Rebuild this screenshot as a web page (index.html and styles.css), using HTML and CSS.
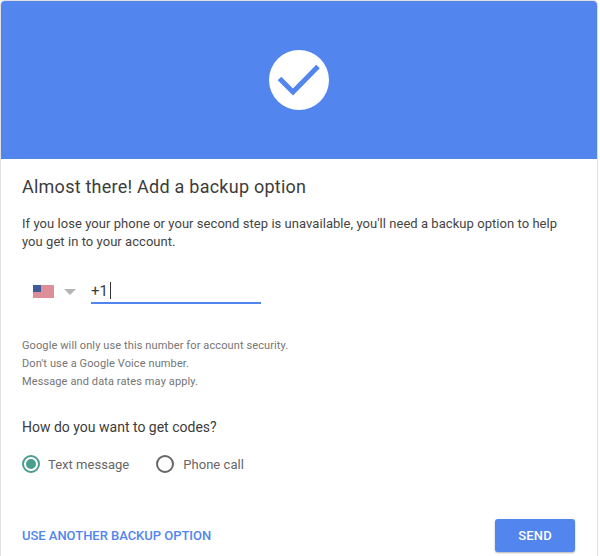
FILE: index.html
```html
<!DOCTYPE html>
<html>
  <head>
    <meta charset="UTF-8" />
    <title>Add a backup option</title>
    <link rel="stylesheet" href="styles.css">
  </head>
  <body>
    <div class="card">
      <!-- BLUE HEADER WITH CHECK -->
      <div class="banner">
        <svg class="check" width="60" height="60" viewBox="0 0 60 60">
          <circle cx="30" cy="30" r="30" fill="#ffffff" />
          <path d="M10.5 28.5 L24 42 L49 16.5" fill="none" stroke="#5285ee" stroke-width="5" />
        </svg>
      </div>

      <div class="content">
        <h1>Almost there! Add a backup option</h1>
        <p class="intro">
          If you lose your phone or your second step is unavailable, you'll need a backup option to help
          you get in to your account.
        </p>

        <!-- PHONE INPUT -->
        <div class="phone-row">
          <svg class="flag" width="21" height="13" viewBox="0 0 21 13">
            <rect width="21" height="13" fill="#dc8f97" />
            <rect width="8" height="7" fill="#3f5a96" />
          </svg>
          <span class="caret"></span>
          <div class="phone-input">+1<span class="cursor"></span></div>
        </div>

        <div class="notes">
          <div>Google will only use this number for account security.</div>
          <div>Don't use a Google Voice number.</div>
          <div>Message and data rates may apply.</div>
        </div>

        <h2>How do you want to get codes?</h2>
        <div class="radio-row">
          <div class="radio-item">
            <span class="radio selected"></span>
            <span>Text message</span>
          </div>
          <div class="radio-item">
            <span class="radio"></span>
            <span>Phone call</span>
          </div>
        </div>

        <div class="footer">
          <a class="link">USE ANOTHER BACKUP OPTION</a>
          <button class="send">SEND</button>
        </div>
      </div>
    </div>
  </body>
</html>
```

FILE: styles.css
```css
html, body {
  margin: 0;
  height: 556px;
  overflow: hidden;
  background: #ffffff;
}
body {
  font-family: Roboto, "Liberation Sans", sans-serif;
  color: #3c3c3c;
}
.card {
  width: 596px;
  height: 556px;
  border: 1px solid #e0e0e0;
  border-bottom: none;
  border-radius: 5px 5px 0 0;
  overflow: hidden;
}
.banner {
  height: 158px;
  background: #5285ee;
  display: flex;
  align-items: center;
  justify-content: center;
}
.check {
  display: block;
}
.content {
  padding: 16px 22px 0 21px;
}
h1 {
  margin: 0;
  font-size: 18px;
  font-weight: 400;
  line-height: 24px;
  letter-spacing: 0.24px;
  color: #3c3c3c;
}
.intro {
  margin: 16px 0 0;
  font-size: 13px;
  line-height: 18px;
  letter-spacing: 0.05px;
  color: #444444;
}
.phone-row {
  display: flex;
  align-items: center;
  margin-top: 19px;
  height: 40px;
}
.flag {
  margin-left: 11px;
  margin-top: 3px;
  display: block;
}
.caret {
  width: 0;
  height: 0;
  margin-left: 10px;
  margin-top: 3px;
  border-left: 6px solid transparent;
  border-right: 6px solid transparent;
  border-top: 6px solid #b5b5b5;
}
.phone-input {
  width: 170px;
  height: 22px;
  margin-left: 15px;
  margin-top: 3px;
  border-bottom: 2px solid #5285ee;
  font-size: 15px;
  display: flex;
  align-items: center;
}
.cursor {
  width: 1px;
  height: 17px;
  margin-left: 2px;
  background: #333333;
}
.notes {
  margin-top: 27px;
  font-size: 11px;
  line-height: 18px;
  letter-spacing: 0.11px;
  color: #757575;
}
h2 {
  margin: 26px 0 0;
  font-size: 14px;
  font-weight: 400;
  line-height: 20px;
  color: #3c3c3c;
}
.radio-row {
  display: flex;
  align-items: center;
  gap: 27px;
  margin-top: 18px;
  font-size: 13px;
  letter-spacing: 0.03px;
  color: #666666;
}
.radio-item {
  display: flex;
  align-items: center;
  gap: 8px;
}
.radio-item + .radio-item {
  gap: 9px;
}
.radio {
  width: 14px;
  height: 14px;
  border: 2px solid #666666;
  border-radius: 50%;
  display: flex;
  align-items: center;
  justify-content: center;
}
.radio.selected {
  border-color: #4a9d8f;
}
.radio.selected::after {
  content: "";
  width: 10px;
  height: 10px;
  border-radius: 50%;
  background: #4a9d8f;
}
.footer {
  display: flex;
  align-items: center;
  justify-content: space-between;
  margin-top: 46px;
}
.link {
  font-size: 13px;
  font-weight: 500;
  letter-spacing: -0.03px;
  color: #5285ee;
}
.send {
  width: 80px;
  height: 33px;
  border: none;
  border-radius: 3px;
  background: #5285ee;
  color: #ffffff;
  font-family: inherit;
  font-size: 13px;
  font-weight: 500;
  letter-spacing: 0.2px;
  box-shadow: 0 1px 2px rgba(0, 0, 0, 0.3);
}
```
